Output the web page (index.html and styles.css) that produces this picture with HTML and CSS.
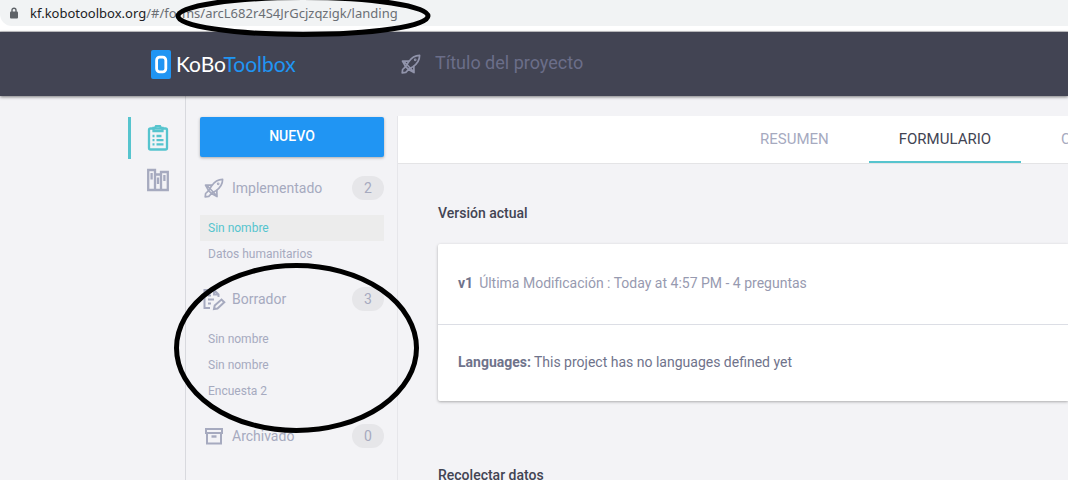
FILE: index.html
```html
<!DOCTYPE html>
<html lang="es">
<head>
<meta charset="utf-8">
<meta name="viewport" content="width=device-width, initial-scale=1">
<title>KoBoToolbox</title>
<link rel="stylesheet" href="styles.css">
</head>
<body>
<svg class="sprite" aria-hidden="true">
  <symbol id="rocket" viewBox="0 0 20 20">
    <path d="M7.5 8C10.5 3.6 13.5 1.4 18.6 1.4C18.6 6 16.5 9.5 12 12.6L7.5 15.5L4.6 12.6Z"/>
    <path d="M8 7.2L1.5 7.2L4.6 12.6M12.8 12L13 18.6L7.5 15.5M4.6 12.6L1.6 15.5L1.2 18.8L4.8 18.4L7.5 15.5M3 7.5L12.5 17.5"/>
    <circle cx="14.2" cy="5.8" r=".5"/>
  </symbol>
</svg>

<div class="browser-bar">
  <div class="address">
    <svg class="lock" viewBox="0 0 10 12" aria-hidden="true"><path d="M3 5V3.2a2 2 0 0 1 4 0V5" fill="none" stroke="#5f6368" stroke-width="1.4"/><rect x="1" y="4.5" width="8" height="7" rx="1" fill="#5f6368"/></svg>
    <span class="url"><span class="host">kf.kobotoolbox.org</span>/#/forms/arcL682r4S4JrGcjzqzigk/landing</span>
  </div>
</div>

<header class="topbar">
  <a class="logo" href="#">
    <svg class="logo-mark" viewBox="0 0 20 29" aria-hidden="true"><rect width="20" height="29" rx="2" fill="#2095f3"/><rect x="5.6" y="7.2" width="9.2" height="14.6" rx="3" fill="none" stroke="#fff" stroke-width="2.8"/></svg>
    <span class="logo-text">KoBo<span class="logo-accent">Toolbox</span></span>
  </a>
  <label class="project">
    <svg class="icon rocket"><use href="#rocket"/></svg>
    <input class="project-title" type="text" placeholder="Título del proyecto" aria-label="Título del proyecto">
  </label>
</header>

<div class="layout">
  <nav class="rail" aria-label="Secciones">
    <a class="rail-link active" href="#" aria-label="Proyectos">
      <svg class="rail-icon" viewBox="0 0 22 26"><rect x="2" y="3.5" width="18" height="21" rx="1.5"/><path d="M6.5 2.8H8L9 1.2H13L14 2.8H15.5V6.2H6.5Z"/><path d="M5.5 11H7.5M9.5 11H14.5M5.5 15.2H7.5M9.5 15.2H16.5M5.5 19.4H7.5M9.5 19.4H16.5"/></svg>
    </a>
    <a class="rail-link" href="#" aria-label="Biblioteca">
      <svg class="rail-icon" viewBox="0 0 22 26"><path d="M1.2 3H8V23H1.2ZM8 7.5H14V23H8ZM14 5H20.8V23H14ZM4.6 6V12.5M11 10.5V17M17.4 8V14"/></svg>
    </a>
  </nav>

  <aside class="sidebar">
    <button class="new-button" type="button">NUEVO</button>
    <section class="group">
      <h2 class="group-head"><svg class="icon rocket"><use href="#rocket"/></svg><span class="group-name">Implementado</span><span class="count">2</span></h2>
      <ul class="forms">
        <li><a class="selected" href="#">Sin nombre</a></li>
        <li><a href="#">Datos humanitarios</a></li>
      </ul>
    </section>
    <section class="group">
      <h2 class="group-head"><svg class="icon" viewBox="0 0 20 20"><path d="M6 19H.5V1H10L14.5 5.5V8M10 1V5.5H14.5M4 6.5H7M4 10.5H10M4 14.5H7"/><path d="M10 20L10.7 16.5L17.5 10.5L20.3 13.2L13.5 19.5Z"/></svg><span class="group-name">Borrador</span><span class="count">3</span></h2>
      <ul class="forms">
        <li><a href="#">Sin nombre</a></li>
        <li><a href="#">Sin nombre</a></li>
        <li><a href="#">Encuesta 2</a></li>
      </ul>
    </section>
    <section class="group">
      <h2 class="group-head"><svg class="icon" viewBox="0 0 20 20"><path d="M2 3H18V7H2ZM3 7V17.6H17V7"/><path d="M7.5 10.5H12.5" stroke-width="2.4"/></svg><span class="group-name">Archivado</span><span class="count">0</span></h2>
    </section>
  </aside>

  <main class="content">
    <nav class="tabs" aria-label="Proyecto">
      <a class="tab" href="#">RESUMEN</a>
      <a class="tab current" href="#">FORMULARIO</a>
      <a class="tab" href="#">CONFIGURACIÓN</a>
    </nav>
    <div class="panel">
      <h3 class="heading">Versión actual</h3>
      <div class="card">
        <p class="row version"><strong>v1</strong><span>Última Modificación : Today at 4:57 PM - 4 preguntas</span></p>
        <p class="row"><strong>Languages:</strong><span>This project has no languages defined yet</span></p>
      </div>
      <h3 class="heading">Recolectar datos</h3>
    </div>
  </main>
</div>

<svg class="marks" aria-hidden="true">
  <ellipse cx="303" cy="16" rx="125" ry="18.5"/>
  <ellipse cx="296.5" cy="348" rx="120" ry="82.5"/>
</svg>
</body>
</html>
```

FILE: styles.css
```css
* { box-sizing: border-box; }

body {
  display: flex;
  flex-direction: column;
  height: 100vh;
  margin: 0;
  overflow: hidden;
  background: #f3f3f6;
  color: #a6aabf;
  font-family: Roboto, "Liberation Sans", sans-serif;
  font-size: 14px;
  line-height: 20px;
}

a { color: inherit; text-decoration: none; }
h2, h3, p, ul { margin: 0; padding: 0; }
ul { list-style: none; }

.sprite { display: none; }

.browser-bar {
  flex: none;
  padding-bottom: 5px;
  background: #fff;
  border-bottom: 1px solid #c9c9cc;
}

.address {
  display: flex;
  align-items: center;
  gap: 11px;
  height: 26px;
  padding-left: 9px;
  background: #f1f3f4;
  border-bottom-left-radius: 12px;
}

.lock { width: 10px; height: 12px; }

.url {
  color: #6b6f74;
  font-family: "Noto Sans", "Open Sans", sans-serif;
  font-size: 13px;
}

.host { color: #202124; }

.topbar {
  flex: none;
  display: flex;
  align-items: center;
  height: 64px;
  padding-left: 151px;
  background: #424453;
  box-shadow: 0 1px 3px rgba(0, 0, 0, .5);
  z-index: 1;
}

.logo {
  display: flex;
  align-items: center;
  gap: 5px;
  width: 250px;
  color: #fff;
}

.logo-mark { width: 20px; height: 29px; }
.logo-text { font-family: Lato, sans-serif; font-size: 21px; font-weight: 400; }
.logo-accent { color: #2095f3; }

.icon {
  flex: none;
  width: 20px;
  height: 20px;
  overflow: visible;
  fill: none;
  stroke: #a6aabf;
  stroke-width: 2;
}

.rocket { stroke-width: 1.7; stroke-linejoin: round; }

.project { display: flex; flex: 1; align-items: center; gap: 14px; }
.project .icon { stroke: #9194ab; }

.project-title {
  flex: 1;
  min-width: 0;
  padding: 0 0 2px;
  border: 0;
  outline: 0;
  background: none;
  color: #fff;
  font: 18px/24px Roboto, sans-serif;
}

.project-title::placeholder { color: #6b6e89; opacity: 1; }

.layout { display: flex; flex: 1; min-height: 0; }

.rail {
  flex: none;
  width: 186px;
  padding: 21px 0 0 128px;
  border-right: 1px solid #d8d9de;
}

.rail-link {
  display: flex;
  align-items: center;
  height: 42px;
  padding-left: 16px;
  border-left: 3px solid transparent;
}

.rail-link.active { border-color: #56c4ce; }

.rail-icon {
  width: 22px;
  height: 26px;
  fill: none;
  stroke: #a6aabf;
  stroke-width: 2.3;
}

.active .rail-icon { stroke: #56c4ce; }

.sidebar { flex: none; width: 211px; padding: 21px 13px 0 14px; }

.new-button {
  width: 100%;
  height: 40px;
  margin-bottom: 19px;
  padding: 0 0 2px;
  border: 0;
  border-radius: 2px;
  background: #2095f3;
  box-shadow: 0 1px 3px rgba(0, 0, 0, .3);
  color: #fff;
  font: 500 14px/20px Roboto, sans-serif;
}

.group { margin-bottom: 20px; }

.group-head {
  display: flex;
  align-items: center;
  gap: 8px;
  height: 24px;
  padding-left: 4px;
  font-size: 14px;
  font-weight: 400;
}

.group-name { flex: 1; }

.count {
  width: 32px;
  border-radius: 12px;
  background: #e6e6e9;
  line-height: 24px;
  text-align: center;
}

.forms { margin-top: 15px; font-size: 12px; }
.forms a { display: block; padding-left: 8px; line-height: 26px; }
.forms .selected { background: #ececec; color: #56c4ce; }

.content { flex: 1; min-width: 0; margin-top: 20px; border-left: 1px solid #e6e6ea; }

.tabs {
  display: flex;
  gap: 10px;
  height: 48px;
  padding-left: 332px;
  overflow: hidden;
  background: #fff;
  border-bottom: 1px solid #e4e4e6;
  font-size: 15px;
}

.tab {
  flex: none;
  padding: 0 30px;
  border-bottom: 2px solid transparent;
  line-height: 46px;
}

.tab.current { border-color: #56c4ce; color: #424453; }

.panel { padding: 39px 0 0 40px; }
.heading { color: #424453; font-size: 14px; font-weight: 500; line-height: 20px; }

.card {
  margin: 21px 0 64px;
  border-radius: 2px 0 0 2px;
  background: #fff;
  box-shadow: 0 1px 3px rgba(0, 0, 0, .3);
  color: #6f738b;
}

.row { display: flex; gap: 3px; padding: 27px 20px 29px; }
.row strong { color: #6f738b; font-weight: 700; }
.version { gap: 6px; padding: 29px 20px 31px; border-bottom: 1px solid #dcdee5; color: #979ab0; }

.marks {
  position: absolute;
  top: 0;
  left: 0;
  width: 100%;
  height: 100%;
  pointer-events: none;
  fill: none;
  stroke: #000;
  stroke-width: 5;
  z-index: 2;
}
```
